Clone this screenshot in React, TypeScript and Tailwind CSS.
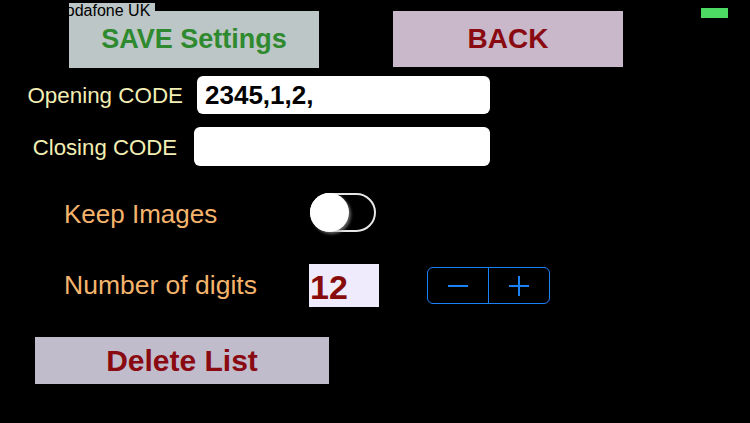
import React from "react";

export default function App() {
  return (
    <div
      className="relative w-[750px] h-[423px] bg-black overflow-hidden"
      style={{ fontFamily: '"Liberation Sans", Arial, sans-serif' }}
    >
      {/* top buttons */}
      <div className="flex pt-[11px]">
        <div className="ml-[69px] w-[250px] h-[57px] bg-[#bcc6c6] flex items-center justify-center">
          <span className="text-[27px] font-bold text-[#2f8a2f]">SAVE Settings</span>
        </div>
        <div className="ml-[74px] w-[230px] h-[56px] bg-[#c8b8c9] flex items-center justify-center">
          <span className="text-[28px] font-bold text-[#8a0a12]">BACK</span>
        </div>
      </div>

      {/* Opening code */}
      <div className="flex items-center mt-[8px] h-[38px]">
        <div className="w-[183px] text-right text-[22.4px] text-[#f2eeb4] pt-[2px] whitespace-nowrap">Opening CODE</div>
        <div className="ml-[14px] w-[293px] h-[38px] bg-white rounded-[6px] flex items-center pl-[8px]">
          <span className="text-[26px] font-semibold text-black">2345,1,2,</span>
        </div>
      </div>

      {/* Closing code */}
      <div className="flex items-center mt-[13px] h-[39px]">
        <div className="w-[177px] text-right text-[22.2px] text-[#f2eeb4] pt-[2px] whitespace-nowrap">Closing CODE</div>
        <div className="ml-[17px] w-[296px] h-[39px] bg-white rounded-[6px]"></div>
      </div>

      {/* Keep images */}
      <div className="flex items-center mt-[27px] h-[39px]">
        <div className="ml-[64px] w-[246px] text-[26px] text-[#f5b46c] pt-[3px]">Keep Images</div>
        <div className="w-[66px] h-[39px] rounded-full border-2 border-[#e6e6e6] relative">
          <div className="absolute left-[-2px] top-[-2px] w-[39px] h-[39px] rounded-full bg-white shadow-[2px_2px_3px_rgba(160,160,160,0.6)]"></div>
        </div>
      </div>

      {/* Number of digits */}
      <div className="flex items-center mt-[32px] h-[43px]">
        <div className="ml-[64px] w-[245px] text-[26.5px] text-[#f5b46c] whitespace-nowrap">Number of digits</div>
        <div className="w-[70px] h-[43px] bg-[#efebfd] flex items-center">
          <span className="text-[34px] font-bold text-[#880b0b] ml-[1px] leading-none mt-[2px]">12</span>
        </div>
        <div className="ml-[48px] w-[123px] h-[37px] border-[1.5px] border-[#1b82f5] rounded-[6px] flex">
          <div className="w-[61px] h-full flex items-center justify-center border-r-[1.5px] border-[#1b82f5]">
            <svg width="22" height="4" viewBox="0 0 22 4">
              <line x1="1" y1="2" x2="21" y2="2" stroke="#1b82f5" strokeWidth="2" />
            </svg>
          </div>
          <div className="flex-1 h-full flex items-center justify-center">
            <svg width="22" height="22" viewBox="0 0 22 22">
              <line x1="1" y1="11" x2="21" y2="11" stroke="#1b82f5" strokeWidth="2" />
              <line x1="11" y1="1" x2="11" y2="21" stroke="#1b82f5" strokeWidth="2" />
            </svg>
          </div>
        </div>
      </div>

      {/* Delete list */}
      <div className="flex mt-[30px]">
        <div className="ml-[35px] w-[294px] h-[47px] bg-[#c1bccb] flex items-center justify-center">
          <span className="text-[30px] font-bold text-[#8a0a12]">Delete List</span>
        </div>
      </div>

      {/* status bar overlays */}
      <div className="absolute left-[69px] top-[3px] w-[86px] h-[17px] bg-[#bcc6c6] overflow-hidden">
        <span className="absolute left-[-13px] top-[0px] text-[16px] text-black leading-none whitespace-nowrap">Vodafone UK</span>
      </div>
      <div className="absolute left-[701px] top-[8px] w-[27px] h-[10px] bg-[#4cd964]"></div>
    </div>
  );
}
